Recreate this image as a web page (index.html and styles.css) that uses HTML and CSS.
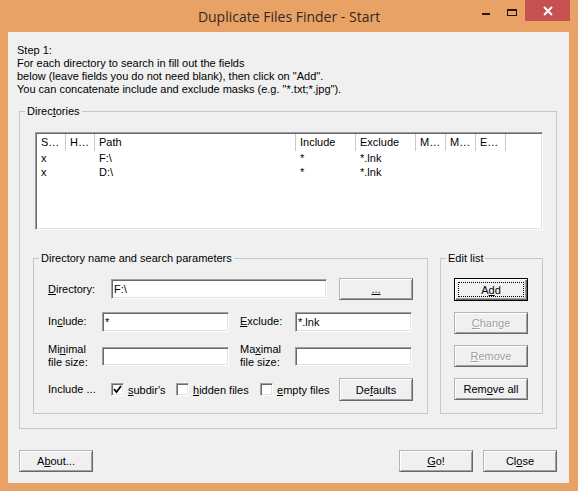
FILE: index.html
```html
<!DOCTYPE html>
<html>
<head>
<meta charset="utf-8">
<title>Duplicate Files Finder - Start</title>
<link rel="stylesheet" href="styles.css">
</head>
<body>
<div class="window">
  <div class="titlebar">
    <div></div>
    <div class="title">Duplicate Files Finder - Start</div>
    <div class="controls">
      <span class="ctl min"><span class="min-bar"></span></span>
      <span class="ctl max"><span class="max-box"></span></span>
      <span class="ctl close"><svg width="10" height="10" viewBox="0 0 10 10"><path d="M1 1 L9 9 M9 1 L1 9" stroke="#fff" stroke-width="2" fill="none"/></svg></span>
    </div>
  </div>
  <div class="client">
    <p class="intro">Step 1:<br>For each directory to search in fill out the fields<br>below (leave fields you do not need blank), then click on "Add".<br>You can concatenate include and exclude masks (e.g. "*.txt;*.jpg").</p>

    <fieldset class="group dirs">
      <legend>Direc<u>t</u>ories</legend>
      <div class="dirs-body">
        <div class="listview">
          <div class="lv-head">
            <span class="hc">S…</span>
            <span class="hc">H…</span>
            <span class="hc">Path</span>
            <span class="hc">Include</span>
            <span class="hc">Exclude</span>
            <span class="hc">M…</span>
            <span class="hc">M…</span>
            <span class="hc">E…</span>
            <span class="hc last"></span>
          </div>
          <div class="lv-row">
            <span>x</span><span></span><span>F:\</span><span>*</span><span>*.lnk</span><span></span><span></span><span></span><span></span>
          </div>
          <div class="lv-row">
            <span>x</span><span></span><span>D:\</span><span>*</span><span>*.lnk</span><span></span><span></span><span></span><span></span>
          </div>
        </div>

        <div class="lower">
          <fieldset class="group params">
            <legend>Directory name and search parameters</legend>
            <div class="params-body">
              <div class="row r1">
                <label class="lbl w63"><u>D</u>irectory:</label>
                <input class="field w216" type="text" value="F:\">
                <button class="btn browse"><u>...</u></button>
              </div>
              <div class="row r2">
                <label class="lbl w54">In<u>c</u>lude:</label>
                <input class="field w127" type="text" value="*">
                <label class="lbl w55 ml11"><u>E</u>xclude:</label>
                <input class="field w117" type="text" value="*.lnk">
              </div>
              <div class="row r3">
                <label class="lbl w54 two">Mi<u>n</u>imal<br>file size:</label>
                <input class="field w127 h19" type="text" value="">
                <label class="lbl w55 ml11 two">Ma<u>x</u>imal<br>file size:</label>
                <input class="field w117 h19" type="text" value="">
              </div>
              <div class="row r4">
                <span class="lbl w63">Include ...</span>
                <span class="chk w65"><span class="box"><svg width="9" height="9" viewBox="0 0 9 9"><path d="M1 4 L3.5 7 L8 1" stroke="#000" stroke-width="1.8" fill="none"/></svg></span><u>s</u>ubdir's</span>
                <span class="chk w84"><span class="box"></span><u>h</u>idden files</span>
                <span class="chk w79"><span class="box"></span><u>e</u>mpty files</span>
                <button class="btn defaults">De<u>f</u>aults</button>
              </div>
            </div>
          </fieldset>

          <fieldset class="group edit">
            <legend>Edit list</legend>
            <div class="edit-body">
              <button class="btn default"><span class="focus">A<u>d</u>d</span></button>
              <button class="btn disabled"><u>C</u>hange</button>
              <button class="btn disabled"><u>R</u>emove</button>
              <button class="btn">Rem<u>o</u>ve all</button>
            </div>
          </fieldset>
        </div>
      </div>
    </fieldset>

    <div class="bottom">
      <button class="btn">A<u>b</u>out...</button>
      <div class="spacer"></div>
      <button class="btn"><u>G</u>o!</button>
      <button class="btn">Cl<u>o</u>se</button>
    </div>
  </div>
</div>
</body>
</html>
```

FILE: styles.css
```css
* { box-sizing: border-box; }
html, body { margin: 0; padding: 0; }
body {
  width: 578px;
  height: 491px;
  overflow: hidden;
  background: #e9a266;
  font-family: "Liberation Sans", Arial, sans-serif;
  font-size: 11px;
  color: #000;
}
.window {
  display: flex;
  flex-direction: column;
  height: 491px;
}
.titlebar {
  height: 32px;
  flex: none;
  display: grid;
  grid-template-columns: 1fr auto 1fr;
}
.title {
  font-family: "Open Sans", "Noto Sans", sans-serif;
  font-size: 14px;
  color: #33291f;
  line-height: 34px;
  white-space: nowrap;
}
.controls {
  display: flex;
  justify-content: flex-end;
  align-items: flex-start;
  padding-right: 8px;
}
.ctl {
  display: flex;
  justify-content: center;
  height: 21px;
}
.min { width: 26px; align-items: flex-end; padding-bottom: 6px; }
.min-bar { width: 8px; height: 2px; background: #2a1a0c; }
.max { width: 26px; align-items: flex-start; padding-top: 9px; }
.max-box { width: 10px; height: 7px; border: 1px solid #2a1a0c; border-top-width: 2px; }
.close { width: 45px; background: #c75050; align-items: center; }

.client {
  flex: 1;
  margin: 0 9px 8px 8px;
  background: #f0f0f0;
  padding: 12px 12px 10px 9px;
  display: flex;
  flex-direction: column;
}
.intro {
  margin: 0 0 8px 0;
  line-height: 13px;
}

fieldset.group {
  margin: 0;
  padding: 0;
  border: 1px solid #c6c6c6;
  min-width: 0;
}
fieldset.group legend {
  margin-left: 5px;
  padding: 0 2px;
  line-height: 14px;
}
fieldset.dirs { margin-left: 2px; }
.dirs-body { padding: 14px 13px 14px 13px; }

.listview {
  margin-left: 2px;
  height: 98px;
  background: #fff;
  border: 1px solid;
  border-color: #a0a0a0 #fff #fff #a0a0a0;
  box-shadow: inset 1px 1px #696969, inset -1px -1px #e3e3e3;
  padding: 1px;
}
.lv-head, .lv-row {
  display: grid;
  grid-template-columns: 29px 29px 201px 60px 60px 30px 30px 30px 1fr;
}
.lv-head { height: 17px; }
.hc {
  border-right: 1px solid #c8c8c8;
  padding-left: 4px;
  line-height: 17px;
  white-space: nowrap;
  overflow: hidden;
}
.hc.last { border-right: none; }
.lv-row { height: 14px; line-height: 14px; }
.lv-row span { padding-left: 4px; white-space: nowrap; }

.lower {
  display: flex;
  gap: 12px;
  margin-top: 21px;
}
.params { width: 395px; }
.edit { width: 103px; }
.params-body { padding: 13px 14px 12px 14px; }
.edit-body {
  padding: 13px 13px 12px 13px;
  display: flex;
  flex-direction: column;
  gap: 11px;
}

.row { display: flex; align-items: center; }
.r1 { height: 22px; }
.r2 { height: 21px; margin-top: 11px; }
.r3 { height: 26px; margin-top: 11px; }
.r4 { height: 23px; margin-top: 9px; }
.lbl { white-space: nowrap; line-height: 13px; }
.w63 { width: 63px; }
.w54 { width: 54px; }
.w55 { width: 55px; }
.ml11 { margin-left: 11px; }
.w216 { width: 216px; }
.w127 { width: 127px; }
.w117 { width: 117px; }
.w65 { width: 65px; }
.w84 { width: 84px; }
.w79 { width: 79px; }

.field {
  font: inherit;
  color: #000;
  height: 20px;
  background: #fff;
  border: 1px solid;
  border-color: #a0a0a0 #fff #fff #a0a0a0;
  box-shadow: inset 1px 1px #696969, inset -1px -1px #e3e3e3;
  padding: 0 2px;
  margin: 0;
  outline: none;
}
.field.h19 { height: 19px; }

.chk { display: flex; align-items: center; white-space: nowrap; }
.box {
  width: 13px;
  height: 13px;
  margin-right: 4px;
  background: #fff;
  border: 1px solid;
  border-color: #a0a0a0 #fff #fff #a0a0a0;
  box-shadow: inset 1px 1px #696969, inset -1px -1px #e3e3e3;
  display: flex;
  align-items: center;
  justify-content: center;
}

.btn {
  font: inherit;
  color: #000;
  width: 74px;
  height: 22px;
  padding: 0;
  margin: 0;
  background: #f0f0f0;
  border: 1px solid;
  border-color: #b4b4b4 #696969 #696969 #b4b4b4;
  box-shadow: inset 1px 1px #fff, inset -1px -1px #a0a0a0;
  display: flex;
  align-items: center;
  justify-content: center;
}
.browse { margin-left: 12px; }
.defaults { height: 23px; }
.btn.default {
  border-color: #000;
  height: 23px;
  box-shadow: inset 1px 1px #fff, inset -1px -1px #696969, inset -2px -2px #a0a0a0;
}
.focus {
  display: flex;
  align-items: center;
  justify-content: center;
  width: 66px;
  height: 15px;
  border: 1px dotted #000;
}
.btn.disabled {
  color: #a0a0a0;
  text-shadow: 1px 1px #fff;
}

.bottom {
  display: flex;
  margin-top: 21px;
  margin-left: 2px;
  gap: 10px;
}
.spacer { flex: 1; }
```
